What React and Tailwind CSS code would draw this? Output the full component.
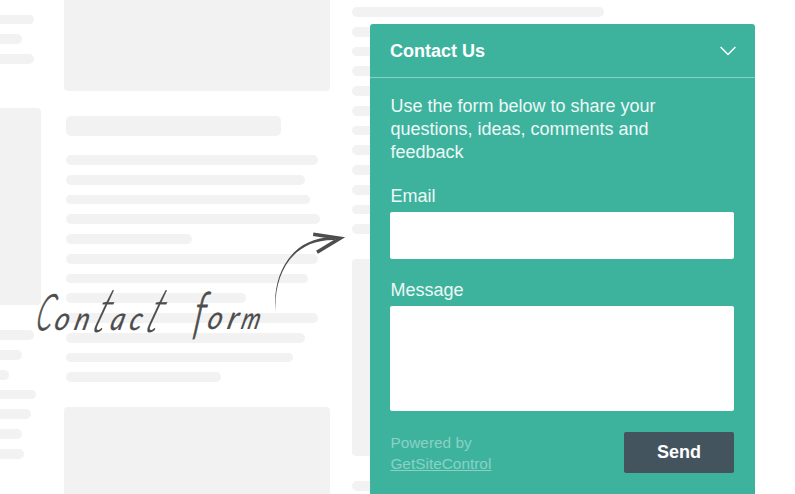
import clsx from 'clsx';

const sidebarTop = ['w-[33.5px]', 'w-[21.5px]', 'w-[34px]'];
const sidebarBottom = [
  'w-[33.5px]',
  'w-[21.5px]',
  'w-[8.5px]',
  'w-[36px]',
  'w-[30.5px]',
  'w-[21.5px]',
  'w-[23.5px]',
];
const article = [
  'w-[252px]',
  'w-[239.5px]',
  'w-[244.5px]',
  'w-[254px]',
  'w-[126px]',
  'w-[252px]',
  'w-[242px]',
  'w-[180px]',
  'w-[252px]',
  'w-[239.5px]',
  'w-[227px]',
  'w-[155.5px]',
];
const aside = Array(12).fill('w-[252px]');

// Hand-lettered caption: every letter sits at its own x, tall letters are set larger
const letters = [
  { char: 'C', x: 34, y: 330, size: 50, squeeze: 0.52, skew: -14 },
  { char: 'o', x: 53, y: 330, size: 32, squeeze: 0.88, skew: -14 },
  { char: 'n', x: 73, y: 330, size: 32, squeeze: 0.85, skew: -14 },
  { char: 't', x: 90, y: 332, size: 62, squeeze: 0.66, skew: -21 },
  { char: 'a', x: 109, y: 330, size: 32, squeeze: 0.85, skew: -14 },
  { char: 'c', x: 128, y: 330, size: 32, squeeze: 0.85, skew: -14 },
  { char: 't', x: 143, y: 332, size: 62, squeeze: 0.66, skew: -21 },
  { char: 'f', x: 192, y: 332, size: 56, squeeze: 0.68, skew: -8 },
  { char: 'o', x: 206, y: 329, size: 32, squeeze: 0.88, skew: -14 },
  { char: 'r', x: 226, y: 329, size: 32, squeeze: 0.95, skew: -14 },
  { char: 'm', x: 240, y: 329, size: 30, squeeze: 0.78, skew: -14 },
];

function Lines({ widths, flush, className }) {
  return (
    <div className={clsx('flex flex-col gap-[10px]', className)}>
      {widths.map((width, i) => (
        <span
          key={i}
          className={clsx('h-[9.75px] bg-[#f2f2f2]', flush ? 'rounded-r-full' : 'rounded-full', width)}
        />
      ))}
    </div>
  );
}

function PagePlaceholder() {
  return (
    <div className="flex h-full" aria-hidden>
      <div className="flex w-[63.5px] shrink-0 flex-col pt-[14.5px]">
        <Lines widths={sidebarTop} flush />
        <div className="mt-[44.5px] h-[197px] w-[41px] shrink-0 rounded-r bg-[#f2f2f2]" />
        <Lines widths={sidebarBottom} flush className="mt-[25px]" />
      </div>
      <div className="flex w-[288.5px] shrink-0 flex-col">
        <div className="h-[91px] w-[266.5px] shrink-0 rounded-b bg-[#f2f2f2]" />
        <div className="mt-[24.5px] ml-[2px] h-[20px] w-[215px] shrink-0 rounded-[5px] bg-[#f2f2f2]" />
        <Lines widths={article} className="mt-[19.5px] ml-[2px]" />
        <div className="mt-[24.5px] w-[266.5px] grow rounded-t bg-[#f2f2f2]" />
      </div>
      <div className="flex flex-col pt-[7px]">
        <Lines widths={aside} />
        <div className="mt-[25px] h-[197px] w-[252px] shrink-0 rounded bg-[#f2f2f2]" />
        <Lines widths={['w-[252px]']} className="mt-[25px]" />
      </div>
    </div>
  );
}

function Annotation() {
  return (
    <svg
      className="absolute top-[220px] left-[30px] font-['Lato','Liberation_Sans',sans-serif] italic"
      width="330"
      height="130"
      viewBox="30 220 330 130"
    >
      <g fill="#4d4d4d" stroke="#4d4d4d">
        {letters.map(({ char, x, y, size, squeeze, skew }) => (
          <text
            key={x}
            fontSize={size}
            fontWeight={size > 40 ? 300 : 400}
            strokeWidth={char === 'C' || char === 'f' ? 1 : 0.2}
            transform={`translate(${x} ${y}) skewX(${skew}) scale(${squeeze} 1)`}
          >
            {char}
          </text>
        ))}
      </g>
      <path
        d="M275.6 312 C273.5 277 290 239 335 240 L335 237.3 C290 236 271.5 277 275.6 312Z"
        fill="#4d4d4d"
      />
      <path d="M313.2 234.3 L340 238.2 L317 252.3" fill="none" stroke="#4d4d4d" strokeWidth="3.6" />
    </svg>
  );
}

function ContactForm() {
  return (
    <form className="absolute top-[24px] left-[370px] flex h-[470px] w-[385px] flex-col rounded-t-[3px] bg-[#3db39e] text-lg text-white">
      <div className="flex h-[54px] shrink-0 items-center justify-between border-b border-[#8ad1c5] pr-[19px] pl-[20px]">
        <h2 className="text-lg font-bold">Contact Us</h2>
        <svg width="16" height="10" viewBox="0 0 16 10" fill="none" stroke="#fff" strokeWidth="1.4">
          <path d="M0.6 1 L8 8.4 L15.4 1" />
        </svg>
      </div>
      <div className="flex flex-col pr-[21px] pl-[20.4px] pt-[17px]">
        <p className="leading-[23px] text-[#edf8f6]">
          Use the form below to share your
          <br />
          questions, ideas, comments and
          <br />
          feedback
        </p>
        <label className="mt-[21px] leading-[23px] text-[#edf8f6]" htmlFor="email">
          Email
        </label>
        <input id="email" type="email" className="mt-[4px] h-[47.4px] rounded-[2px] bg-white px-3 text-slate-700" />
        <label className="mt-[19.6px] leading-[23px] text-[#edf8f6]" htmlFor="message">
          Message
        </label>
        <textarea
          id="message"
          className="mt-[4px] h-[105px] resize-none rounded-[2px] bg-white p-3 text-slate-700"
        />
        <div className="mt-[21px] flex items-start justify-between">
          <p className="text-[15.4px] leading-[21px] text-[#8ad1c5]">
            Powered by
            <br />
            <span className="underline">GetSiteControl</span>
          </p>
          <button type="button" className="h-[41px] w-[110px] rounded-[2px] bg-[#44545f] text-lg font-bold">
            Send
          </button>
        </div>
      </div>
    </form>
  );
}

export default function App() {
  return (
    <main className="relative h-[494px] w-[795px] overflow-hidden bg-white font-['Liberation_Sans',Arial,sans-serif]">
      <PagePlaceholder />
      <Annotation />
      <ContactForm />
    </main>
  );
}
